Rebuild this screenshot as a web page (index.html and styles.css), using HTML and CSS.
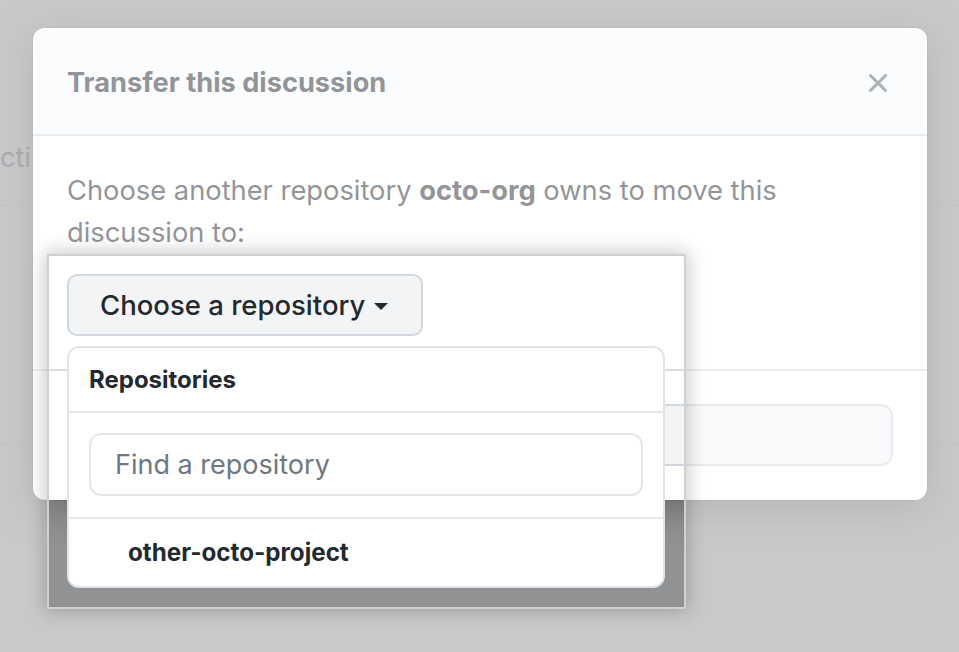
FILE: index.html
```html
<!DOCTYPE html>
<html lang="en">
<head>
<meta charset="utf-8">
<title>Transfer this discussion</title>
<link rel="stylesheet" href="styles.css">
</head>
<body>
<div class="screen">
  <div class="under">
    <div class="under-row under-row-1"><span class="under-text">ction</span></div>
    <div class="under-row under-row-2"></div>
  </div>

  <div class="modal" role="dialog" aria-label="Transfer this discussion">
    <div class="modal-header">
      <h2 class="modal-title">Transfer this discussion</h2>
      <button class="close-btn" aria-label="Close">
        <svg width="32" height="32" viewBox="0 0 16 16" aria-hidden="true"><path fill="currentColor" d="M3.72 3.72a.75.75 0 0 1 1.06 0L8 6.94l3.22-3.22a.749.749 0 0 1 1.275.326.749.749 0 0 1-.215.734L9.06 8l3.22 3.22a.749.749 0 0 1-.326 1.275.749.749 0 0 1-.734-.215L8 9.06l-3.22 3.220a.751.751 0 0 1-1.042-.018.751.751 0 0 1-.018-1.042L6.94 8 3.72 4.78a.75.75 0 0 1 0-1.06Z"/></svg>
      </button>
    </div>
    <div class="modal-body">
      <p class="modal-text">Choose another repository <strong>octo-org</strong> owns to move this discussion to:</p>
      <div class="menu-wrap">
        <button class="select-btn">Choose a repository <span class="caret"></span></button>
        <div class="dropdown">
          <div class="dropdown-header">Repositories</div>
          <div class="dropdown-filter">
            <input class="filter-input" type="text" placeholder="Find a repository">
          </div>
          <div class="dropdown-item">other-octo-project</div>
        </div>
      </div>
    </div>
    <div class="modal-footer">
      <button class="footer-btn">Transfer discussion</button>
    </div>
  </div>

  <div class="spotlight"></div>
</div>
</body>
</html>
```

FILE: styles.css
```css
* { box-sizing: border-box; }

html, body {
  margin: 0;
  padding: 0;
}

body {
  font-family: Inter, "Noto Sans", "Liberation Sans", sans-serif;
  color: #24292f;
  background: #909294;
}

.screen {
  position: relative;
  width: 959px;
  height: 652px;
  overflow: hidden;
  background: #909294;
}

/* underlying page behind the modal backdrop */
.under-row {
  border-bottom: 1px solid rgba(0, 0, 0, 0.07);
}
.under-row-1 {
  height: 206px;
  padding-top: 137px;
}
.under-row-2 {
  height: 238px;
}
.under-text {
  display: block;
  font-size: 27.3px;
  line-height: 42px;
  color: #55585c;
  white-space: nowrap;
}

/* modal dialog */
.modal {
  position: absolute;
  left: 33px;
  top: 28px;
  width: 894px;
  background: #ffffff;
  border-radius: 12px;
  box-shadow: 0 0 0 1px rgba(0, 0, 0, 0.08), 0 8px 40px rgba(0, 0, 0, 0.28);
}

.modal-header {
  display: flex;
  align-items: center;
  justify-content: space-between;
  padding: 34px 33px 30px 34px;
  background: #f6f8fa;
  border-bottom: 2px solid #d8dee4;
  border-radius: 12px 12px 0 0;
}

.modal-title {
  margin: 0;
  font-size: 27.2px;
  line-height: 42px;
  font-weight: 700;
  color: #24292f;
}

.close-btn {
  display: flex;
  padding: 0;
  border: 0;
  background: none;
  color: #57606a;
}

.modal-body {
  padding: 34px 34px 33px;
}

.modal-text {
  margin: 0;
  font-size: 27.3px;
  line-height: 42px;
  color: #24292f;
}

.modal-text strong {
  font-weight: 700;
}

.menu-wrap {
  position: relative;
  margin-top: 20px;
  display: flex;
}

.select-btn {
  display: inline-flex;
  align-items: center;
  gap: 9px;
  height: 62px;
  padding: 0 33px 0 31px;
  font-family: inherit;
  font-size: 27.5px;
  font-weight: 500;
  color: #24292f;
  background: #f3f4f6;
  border: 2px solid #d0d7de;
  border-radius: 10px;
}

.caret {
  width: 0;
  height: 0;
  border-left: 7px solid transparent;
  border-right: 7px solid transparent;
  border-top: 7px solid #24292f;
  margin-top: 2px;
}

.dropdown {
  position: absolute;
  left: 0;
  top: 72px;
  width: 598px;
  background: #ffffff;
  border: 2px solid #e1e4e8;
  border-radius: 12px;
  z-index: 2;
}

.dropdown-header {
  height: 65px;
  display: flex;
  align-items: center;
  padding-left: 20px;
  font-size: 24px;
  font-weight: 700;
  color: #24292f;
  border-bottom: 2px solid #e6e8eb;
}

.dropdown-filter {
  padding: 20px 20px 21px;
  border-bottom: 2px solid #e6e8eb;
}

.filter-input {
  display: block;
  width: 100%;
  height: 63px;
  padding: 0 24px;
  font-family: inherit;
  font-size: 27px;
  color: #24292f;
  background: #ffffff;
  border: 2px solid #e4e6ea;
  border-radius: 12px;
  outline: none;
}

.filter-input::placeholder {
  color: #6e7781;
}

.dropdown-item {
  height: 67px;
  display: flex;
  align-items: center;
  padding-left: 59px;
  font-size: 24.2px;
  font-weight: 700;
  color: #24292f;
}

.modal-footer {
  padding: 33px 34px 34px;
  border-top: 2px solid #d8dee4;
}

.footer-btn {
  display: block;
  width: 100%;
  height: 62px;
  font-family: inherit;
  font-size: 27.5px;
  font-weight: 500;
  color: #24292f;
  background: #f3f4f6;
  border: 2px solid #d0d7de;
  border-radius: 12px;
}

/* spotlight cut-out: dims everything except the highlighted region */
.spotlight {
  position: absolute;
  left: 47px;
  top: 254px;
  width: 639px;
  height: 355px;
  border: 2px solid #cfd0d1;
  pointer-events: none;
  z-index: 5;
  box-shadow: 0 0 18px 2px rgba(0, 0, 0, 0.22), 0 0 0 3000px rgba(255, 255, 255, 0.5);
}
```
